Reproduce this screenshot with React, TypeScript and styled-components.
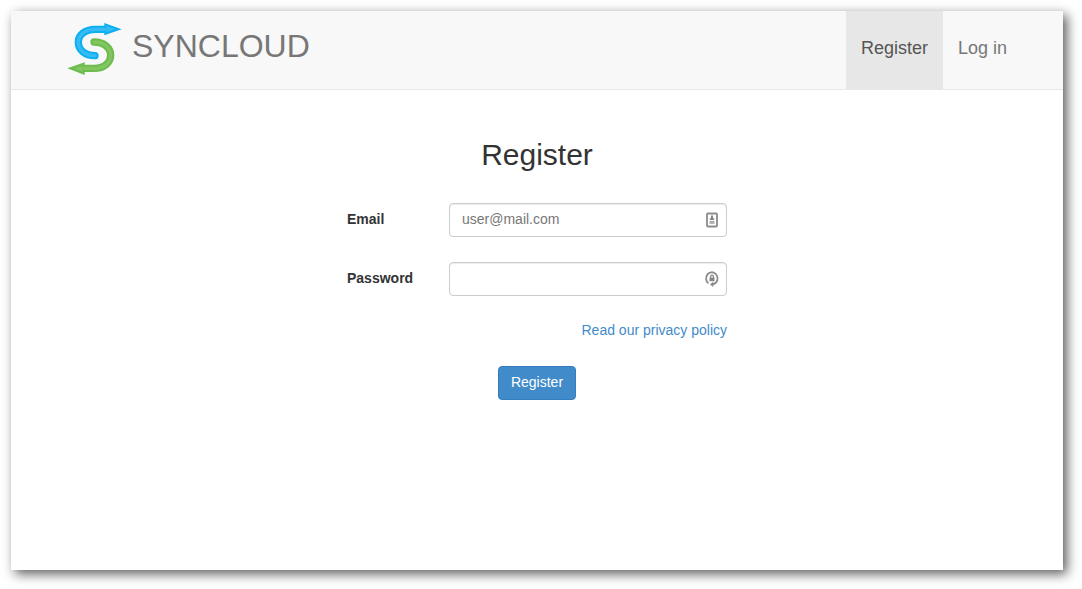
import React from "react";
import styled, { createGlobalStyle } from "styled-components";

const GlobalStyle = createGlobalStyle`
  * { box-sizing: border-box; }
  body {
    margin: 0;
    background: #fff;
    color: #333;
    font: 14px/20px "Liberation Sans", Arial, sans-serif;
  }
`;

const Page = styled.div`
  display: flex;
  min-height: 100vh;
  padding: 11px 19px 19px 11px;
`;

const Frame = styled.div`
  flex: 1;
  background: #fff;
  box-shadow: 4px 4px 11px rgba(0, 0, 0, 0.64);
`;

const Navbar = styled.header`
  background: #f8f8f8;
  border-bottom: 1px solid #e7e7e7;
`;

const NavContainer = styled.div`
  display: flex;
  justify-content: space-between;
  max-width: 970px;
  margin: 0 auto;
  padding-left: 15px;
`;

const Brand = styled.a`
  display: flex;
  align-items: flex-start;
  gap: 10px;
  padding-top: 11px;
  color: #777;
  font-size: 32px;
  line-height: 48px;
  text-decoration: none;
`;

const NavLinks = styled.nav`
  display: flex;
`;

const NavLink = styled.a<{ $active?: boolean }>`
  padding: 27px 15px 31px;
  background: ${(p) => (p.$active ? "#e7e7e7" : "transparent")};
  color: ${(p) => (p.$active ? "#555" : "#777")};
  font-size: 18px;
  text-decoration: none;
`;

const Form = styled.form`
  display: flex;
  flex-direction: column;
  max-width: 380px;
  margin: 0 auto;
  padding: 48px 0;
`;

const Title = styled.h2`
  margin: 0 0 32px;
  font-size: 30px;
  font-weight: 400;
  line-height: 33px;
  text-align: center;
`;

const Field = styled.div`
  display: grid;
  grid-template-columns: 102px 1fr;
  align-items: center;

  & + & {
    margin-top: 25px;
  }
`;

const Label = styled.label`
  padding-bottom: 2px;
  font-weight: 700;
`;

const InputWrap = styled.div`
  position: relative;
  display: flex;

  svg {
    position: absolute;
    top: 9px;
    right: 7px;
  }
`;

const Input = styled.input`
  width: 100%;
  height: 34px;
  padding: 5px 34px 7px 12px;
  border: 1px solid #ccc;
  border-radius: 4px;
  background: #fff;
  box-shadow: inset 0 1px 1px rgba(0, 0, 0, 0.075);
  color: #555;
  font: inherit;

  &::placeholder {
    color: #777;
    opacity: 1;
  }
`;

const PolicyLink = styled.a`
  align-self: flex-end;
  margin: 24px 0 26px;
  color: #428bca;
  text-decoration: none;
`;

const SubmitButton = styled.button`
  align-self: center;
  height: 34px;
  padding: 5px 12px 7px;
  border: 1px solid #357ebd;
  border-radius: 4px;
  background: #428bca;
  color: #fff;
  font: inherit;
  cursor: pointer;
`;

function Logo() {
  const blue = "M134 43H106C74 43 55 60 55 82C55 105 75 122 105 122";
  const green = "M102 81C132 81 152 98 152 121C152 143 132 160 103 160H72";
  return (
    <svg width="55" height="54" viewBox="21 21 165 162" fill="none" strokeLinecap="round" aria-hidden="true">
      <path d={blue} stroke="#0bb0f2" strokeWidth="22" />
      <path d="M133 24L185 43L133 61Z" fill="#0bb0f2" />
      <path d="M139 33L166 43L139 52Z" fill="#36bbf3" />
      <path d={blue} stroke="#36bbf3" strokeWidth="10" />
      <path d={green} stroke="#6cbc4e" strokeWidth="22" />
      <path d="M74 142L22 160L74 180Z" fill="#6cbc4e" />
      <path d="M68 152L42 160L68 170Z" fill="#82c561" />
      <path d={green} stroke="#82c561" strokeWidth="10" />
    </svg>
  );
}

function ContactIcon() {
  return (
    <svg width="16" height="16" viewBox="0 0 16 16" fill="none" aria-hidden="true">
      <rect x="3" y="1.5" width="10" height="13" rx="1" stroke="#8c8c8c" strokeWidth="1.8" />
      <path d="M7 3.5H9V5.5L10.2 7V8H5.8V7L7 5.5Z" fill="#858585" />
      <path d="M5.5 9H10.5V12H5.5Z" fill="#bdbdbd" />
      <path d="M6 10H10" stroke="#999" />
    </svg>
  );
}

function PasswordIcon() {
  return (
    <svg width="16" height="16" viewBox="0 0 16 16" fill="none" aria-hidden="true">
      <path d="M4.4 12.4A5.7 6.2 0 1 1 12.2 11.4Q11 13 8.5 13.4" stroke="#8c8c8c" strokeWidth="1.8" />
      <path d="M9.3 10.8V16L6 13.4Z" fill="#858585" />
      <path d="M6.6 7V5.6A1.4 1.4 0 0 1 9.4 5.6V7" stroke="#858585" strokeWidth="1.2" />
      <path d="M5.5 6.6H10.5V10.2H5.5Z" fill="#858585" />
    </svg>
  );
}

export default function App() {
  return (
    <>
      <GlobalStyle />
      <Page>
        <Frame>
          <Navbar>
            <NavContainer>
              <Brand href="#">
                <Logo />
                <span>SYNCLOUD</span>
              </Brand>
              <NavLinks>
                <NavLink href="#register" $active>Register</NavLink>
                <NavLink href="#login">Log in</NavLink>
              </NavLinks>
            </NavContainer>
          </Navbar>
          <main>
            <Form onSubmit={(e) => e.preventDefault()}>
              <Title>Register</Title>
              <Field>
                <Label htmlFor="email">Email</Label>
                <InputWrap>
                  <Input id="email" type="email" placeholder="user@mail.com" />
                  <ContactIcon />
                </InputWrap>
              </Field>
              <Field>
                <Label htmlFor="password">Password</Label>
                <InputWrap>
                  <Input id="password" type="password" />
                  <PasswordIcon />
                </InputWrap>
              </Field>
              <PolicyLink href="#privacy">Read our privacy policy</PolicyLink>
              <SubmitButton type="submit">Register</SubmitButton>
            </Form>
          </main>
        </Frame>
      </Page>
    </>
  );
}
